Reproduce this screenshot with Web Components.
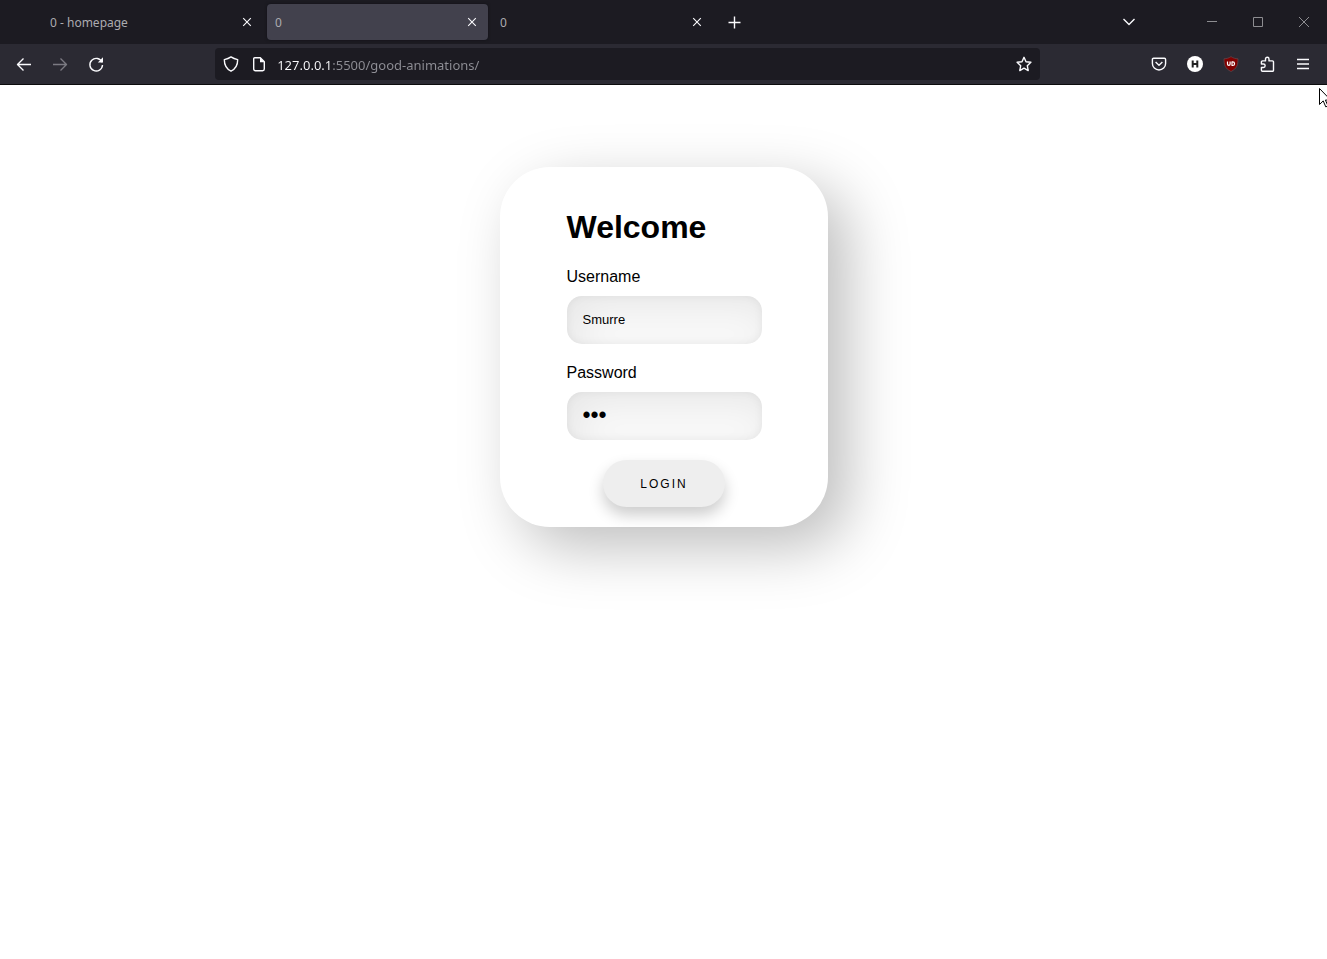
<!DOCTYPE html>
<html lang="en">
<head>
<meta charset="utf-8">
<meta name="viewport" content="width=device-width, initial-scale=1">
<title>0</title>
<style>
  html, body { margin: 0; background: #fff; }
  body { font-family: "Liberation Sans", Arial, sans-serif; font-size: 16px; color: #000; overflow-x: hidden; }
</style>
</head>
<body>
<browser-window>
  <tab-strip slot="chrome">
    <browser-tab label="0 - homepage"></browser-tab>
    <browser-tab label="0" selected></browser-tab>
    <browser-tab label="0"></browser-tab>
  </tab-strip>
  <nav-toolbar slot="chrome" url="127.0.0.1:5500/good-animations/"></nav-toolbar>
  <login-card heading="Welcome">
    <form-field label="Username" type="text" value="Smurre"></form-field>
    <form-field label="Password" type="password" value="abc"></form-field>
    <pill-button slot="action">LOGIN</pill-button>
  </login-card>
</browser-window>
<mouse-pointer></mouse-pointer>

<script>
const ICONS = {
  back: '<path d="M15 8.5H1.5M7.5 2.5l-6 6 6 6"/>',
  forward: '<path d="M1 8.5h13.5M8.500 2.500l6 6-6 6"/>',
  reload: '<path d="M14 6.200A6.300 6.300 0 1 0 14.500 9"/><path d="M15 1.300v5.200h-5.200z" fill="currentColor" stroke="none"/>',
  close: '<path d="M4.200 4.200l7.600 7.600M11.800 4.200l-7.600 7.600" stroke-width="1.100"/>',
  plus: '<path d="M8.500 2.500v12M2.500 8.500h12"/>',
  chevron: '<path d="M2.500 5l5.500 5.500L13.500 5"/>',
  shield: '<path d="M8 .9C6 2.400 3.800 3.200 1.300 3.600c0 5.400 1.500 9.200 6.700 11.600 5.200-2.400 6.700-6.200 6.700-11.600C12.200 3.200 10 2.400 8 .9z"/>',
  page: '<path d="M3.700 1.700h5.600l4 4v7.300a1.700 1.700 0 0 1-1.700 1.700H4.400A1.700 1.700 0 0 1 2.700 13V2.700a1 1 0 0 1 1-1z" /><path d="M9 1.500v4.700h4.700z" fill="currentColor" stroke="none"/>',
  star: '<path d="M8 1.300l2 4.400 4.900.6-3.600 3.400.9 4.900L8 12.200l-4.200 2.400.9-4.900L1.100 6.300 6 5.700z"/>',
  pocket: '<path d="M2.600 2.200h10.800a1.200 1.200 0 0 1 1.200 1.200v4a6.600 6.600 0 0 1-13.200 0v-4a1.200 1.200 0 0 1 1.200-1.200z"/><path d="M4.600 6L8 9.200 11.400 6"/>',
  puzzle: '<path d="M6 15.300H3.500a1.100 1.100 0 0 1-1.100-1.100v-2.700h2a1.700 1.700 0 0 0 0-3.500h-2V6a1.100 1.100 0 0 1 1.100-1.100h3V3a1.700 1.700 0 0 1 3.500 0v1.900h3.400A1.100 1.100 0 0 1 14.500 6v8.200a1.100 1.100 0 0 1-1.100 1.100z"/>',
  menu: '<path d="M2 3.500h12M2 8h12M2 12.500h12"/>',
  minimize: '<path d="M3 7.500h10" stroke-width="1"/>',
  maximize: '<path d="M3.500 3.500h9v9h-9z" stroke-width="1"/>',
  quit: '<path d="M3 3l10 10M13 3L3 13" stroke-width="1"/>',
  badge: '<circle cx="8" cy="8" r="8" fill="#fff" stroke="none"/><path d="M5.700 4.500v7M10.300 4.500v7M5.700 8h4.600" stroke="#222" stroke-width="2"/>',
  blocker: '<path d="M8 .6C6 2 3.800 2.700 1 2.800c0 6 1 9.800 7 12.700 6-2.900 7-6.700 7-12.700C12.200 2.700 10 2 8 .6z" fill="#800000" stroke="#5f4a50" stroke-width=".7"/><path d="M4.500 5.500v2.600a1.300 1.300 0 0 0 2.600 0V5.500M9 5.800h.7a1.800 1.800 0 0 1 0 3.700H9z" stroke="#fff" stroke-width="1.200"/>'
};

class BaseElement extends HTMLElement {
  connectedCallback() {
    if (this.shadowRoot) return;
    this.attachShadow({ mode: 'open' }).innerHTML =
      '<style>:host { display: block; box-sizing: border-box; } *, *::before { box-sizing: border-box; } ' +
      this.css() + '</style>' + this.html();
  }
}

class UiIcon extends BaseElement {
  css() {
    return `:host { display: block; width: 16px; height: 16px; }
      svg { display: block; width: 16px; height: 16px; overflow: visible; }`;
  }
  html() {
    return `<svg viewBox="0 0 16 16" aria-hidden="true" fill="none" stroke="currentColor" stroke-width="1.400" stroke-linejoin="round">${ICONS[this.getAttribute('name')]}</svg>`;
  }
}

class IconButton extends BaseElement {
  css() {
    return `:host { flex: none; color: #fbfbfe; }
      :host([dim]) { color: #7b7a82; }
      :host([caption]) { color: #8d8d91; }
      button { display: flex; align-items: center; justify-content: center;
        width: var(--button-width, 36px); height: var(--button-height, 32px);
        padding: 0; border: 0; border-radius: 4px; background: none; color: inherit; }`;
  }
  html() {
    return `<button type="button" aria-label="${this.getAttribute('label')}"><ui-icon name="${this.getAttribute('icon')}"></ui-icon></button>`;
  }
}

class BrowserWindow extends BaseElement {
  css() {
    return `:host { display: flex; flex-direction: column; min-height: 100vh; }
      header { border-bottom: 1px solid #0c0c0d; }
      main { flex: 1; display: flex; justify-content: center; align-items: flex-start; padding: 82px 0; overflow: hidden; }`;
  }
  html() { return '<header><slot name="chrome"></slot></header><main><slot></slot></main>'; }
}

class TabStrip extends BaseElement {
  css() {
    return `:host { display: flex; align-items: center; height: 44px; padding-left: 40px; background: #1c1b22; }
      .tabs { display: flex; flex: 0 1 auto; min-width: 0; padding-right: 1px; }
      .gap { flex: 1; }
      .chevron { margin-right: 42px; }
      .caption { --button-width: 46px; --button-height: 44px; }`;
  }
  html() {
    return `<div class="tabs" role="tablist"><slot></slot></div>
      <icon-button icon="plus" label="New tab"></icon-button>
      <div class="gap"></div>
      <icon-button class="chevron" icon="chevron" label="List all tabs"></icon-button>
      <icon-button class="caption" caption icon="minimize" label="Minimize"></icon-button>
      <icon-button class="caption" caption icon="maximize" label="Maximize"></icon-button>
      <icon-button class="caption" caption icon="quit" label="Close window"></icon-button>`;
  }
}

class BrowserTab extends BaseElement {
  css() {
    return `:host { display: flex; align-items: center; width: 221px; height: 36px; margin: 0 2px; padding: 0 4px 0 8px;
        border-radius: 4px; color: #fbfbfe; font: 12px/16px "Noto Sans", sans-serif; }
      :host([selected]) { background: #42414d; box-shadow: 0 0 3px #111016; }
      .label { flex: 1; padding: 2px 0 0; border: 0; background: none; color: #acacb0; font: inherit; text-align: left;
        overflow: hidden; white-space: nowrap; }
      icon-button { --button-width: 24px; --button-height: 24px; }`;
  }
  html() {
    return `<button class="label" type="button" role="tab" aria-selected="${this.hasAttribute('selected')}">${this.getAttribute('label')}</button>
      <icon-button icon="close" label="Close tab"></icon-button>`;
  }
}

class NavToolbar extends BaseElement {
  css() {
    return `:host { display: flex; align-items: center; height: 40px; padding: 0 6px; background: #2b2a33; color: #fbfbfe; }
      .spring { flex: 9 1 0; }
      address-bar { flex: 73 1 0; min-width: 0; }`;
  }
  html() {
    return `<icon-button icon="back" label="Back"></icon-button>
      <icon-button dim icon="forward" label="Forward"></icon-button>
      <icon-button icon="reload" label="Reload"></icon-button>
      <div class="spring"></div>
      <address-bar url="${this.getAttribute('url')}"></address-bar>
      <div class="spring"></div>
      <icon-button icon="pocket" label="Save to Pocket"></icon-button>
      <icon-button icon="badge" label="H extension"></icon-button>
      <icon-button icon="blocker" label="Content blocker"></icon-button>
      <icon-button icon="puzzle" label="Extensions"></icon-button>
      <icon-button icon="menu" label="Menu"></icon-button>`;
  }
}

class AddressBar extends BaseElement {
  css() {
    return `:host { display: flex; align-items: center; height: 32px; padding: 0 2px; border-radius: 4px; background: #1c1b22;
        --button-width: 28px; --button-height: 28px; }
      input { flex: 1; min-width: 0; height: 32px; margin: 0; padding: 2px 4px 0; border: 0; outline: 0;
        font: 13px/20px "Noto Sans", sans-serif; color: transparent; caret-color: #fbfbfe;
        background: linear-gradient(to right, #fbfbfe 59px, #8f8f96 59px);
        -webkit-background-clip: text; background-clip: text; }`;
  }
  html() {
    return `<icon-button icon="shield" label="Tracking protection"></icon-button>
      <icon-button icon="page" label="Site information"></icon-button>
      <input type="text" aria-label="Address" value="${this.getAttribute('url')}">
      <icon-button icon="star" label="Bookmark this page"></icon-button>`;
  }
}

class LoginCard extends BaseElement {
  css() {
    return `:host { width: 328px; max-width: 100%; padding: 42px 66px 20px 67px; border-radius: 50px; background: #fff;
        box-shadow: 20px 20px 60px #bebebe; }
      form { display: flex; flex-direction: column; gap: 20px; }
      h1 { margin: 0 0 2px; font-size: 32px; line-height: 37px; }
      .action { display: flex; justify-content: center; }`;
  }
  html() {
    return `<form><h1>${this.getAttribute('heading')}</h1><slot></slot>
      <div class="action"><slot name="action"></slot></div></form>`;
  }
}

class FormField extends BaseElement {
  css() {
    return `:host { display: flex; flex-direction: column; gap: 10px; }
      label { font-size: 16px; line-height: 18px; }
      input { width: 100%; height: 48px; margin: 0; padding: 0 16px 2px; border: 0; outline: 0; border-radius: 15px;
        background: #fbfbfb; color: #000; font: 13px "Liberation Sans", Arial, sans-serif;
        box-shadow: inset 0 0 10px rgba(0, 0, 0, .06), inset 10px 14px 40px rgba(0, 0, 0, .08); }
      input[type="password"] { font-size: 23px; }`;
  }
  html() {
    return `<label for="field">${this.getAttribute('label')}</label>
      <input id="field" type="${this.getAttribute('type')}" value="${this.getAttribute('value')}">`;
  }
}

class PillButton extends BaseElement {
  css() {
    return `button { height: 47px; padding: 0 37px; border: 0; border-radius: 24px; background: #eee; color: #000;
        font: 12px "Liberation Sans", Arial, sans-serif; letter-spacing: 2px; box-shadow: 0 8px 15px rgba(0, 0, 0, .2); }`;
  }
  html() { return '<button type="button"><slot></slot></button>'; }
}

class MousePointer extends BaseElement {
  css() {
    return `:host { position: absolute; top: 88px; right: 0; width: 8px; height: 20px; overflow: hidden; pointer-events: none; }
      svg { display: block; }`;
  }
  html() {
    return `<svg width="13" height="20" viewBox="0 0 13 20" aria-hidden="true"><path d="M.5.5v16l3.700-3.600 2.600 6 2.200-1-2.600-5.800h5.300z" fill="#fff" stroke="#000"/></svg>`;
  }
}

customElements.define('ui-icon', UiIcon);
customElements.define('icon-button', IconButton);
customElements.define('browser-tab', BrowserTab);
customElements.define('tab-strip', TabStrip);
customElements.define('address-bar', AddressBar);
customElements.define('nav-toolbar', NavToolbar);
customElements.define('form-field', FormField);
customElements.define('pill-button', PillButton);
customElements.define('login-card', LoginCard);
customElements.define('browser-window', BrowserWindow);
customElements.define('mouse-pointer', MousePointer);
</script>
</body>
</html>
